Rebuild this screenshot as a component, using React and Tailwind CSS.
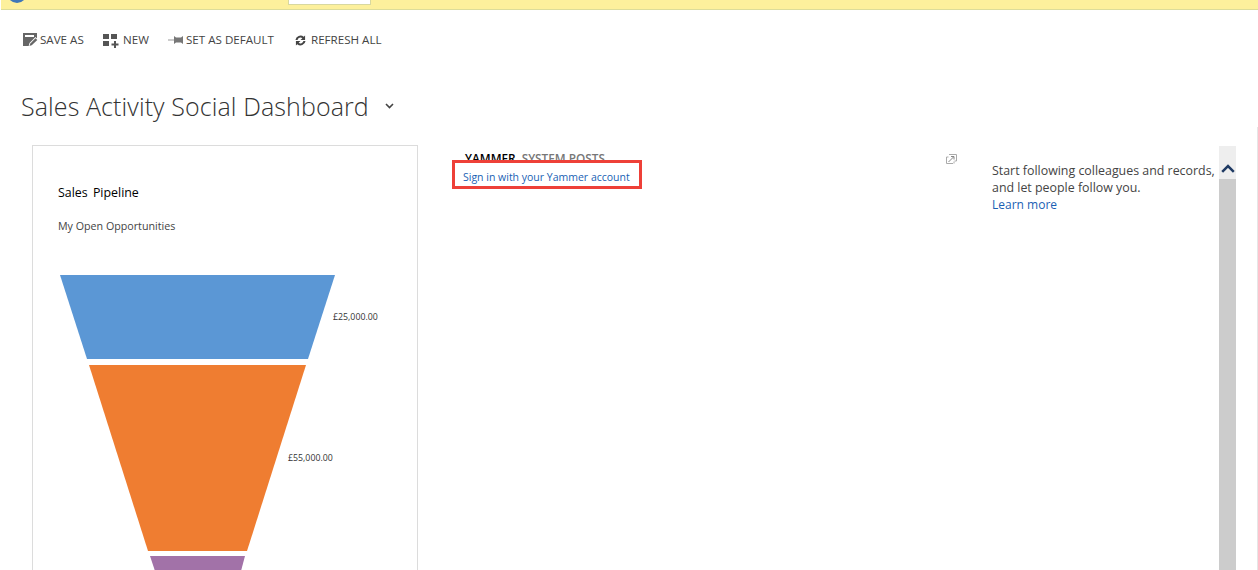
import React from 'react';

const ToolbarItem = ({ icon, label, className }) => (
  <div className={`flex items-center ${className}`}>
    {icon}
    <span className="text-[11.6px] leading-4 text-[#444]">{label}</span>
  </div>
);

const SaveIcon = () => (
  <svg width="16" height="14" viewBox="0 0 16 14" className="mr-[1px]">
    <path d="M0 0h14v6l-6 7H0z" fill="#666" />
    <path d="M2 2h9v2H2z" fill="#fff" />
    <path d="M5.500 13.500l1-3.500 6-6 3 3-6 5.500z" fill="#fff" />
    <path d="M6.500 13l.8-2.500 5.200-5.200 1.800 1.800-5.300 4.900z" fill="#666" />
  </svg>
);

const NewIcon = () => (
  <svg width="16" height="15" viewBox="0 0 16 15" className="mr-[4px]">
    <path d="M0 1h6v5H0zM8 1h6v5H8zM0 8h6v5H0z" fill="#555" />
    <path d="M11 8h2v2.500h2.500v2H13V15h-2v-2.500H8.500v-2H11z" fill="#555" />
  </svg>
);

const PinIcon = () => (
  <svg width="16" height="10" viewBox="0 0 16 10" className="mr-[2px]">
    <path d="M0 4.500h7v1H0z" fill="#999" />
    <path d="M6 1l2 1.500h5L15 1v8l-2-1.500H8L6 9z" fill="#777" />
  </svg>
);

const RefreshIcon = () => (
  <svg width="11" height="11" viewBox="0 0 12 12" className="mr-[5px]">
    <path d="M.5 5.500a5.500 5.500 0 0 1 9-3.500L11 .5v5H6l2-2A3.300 3.300 0 0 0 2.800 5.500z" fill="#444" />
    <path d="M11.500 6.500a5.500 5.500 0 0 1-9 3.500L1 11.500v-5h5l-2 2a3.300 3.300 0 0 0 5.200-2z" fill="#444" />
  </svg>
);

export default function App() {
  return (
    <div className="relative w-[1258px] h-[570px] overflow-hidden bg-white font-['Open_Sans','Liberation_Sans',sans-serif]">
      {/* Notification bar, cut off by the top of the screenshot */}
      <div className="relative h-[10px] ml-[1px] bg-[#fdf09c] border-b border-[#dcdc9a] overflow-hidden">
        <div className="absolute left-[6px] -top-[17px] w-5 h-5 rounded-full bg-[#3f77b8]" />
        <div className="absolute left-[287px] -top-[1px] w-[83px] h-[6px] bg-white border border-[#d8d8a0]" />
      </div>

      {/* Command bar */}
      <div className="flex items-center h-4 mt-[22px] pl-[23px]">
        <ToolbarItem icon={<SaveIcon />} label="SAVE AS" className="w-[80px]" />
        <ToolbarItem icon={<NewIcon />} label="NEW" className="w-[65px]" />
        <ToolbarItem icon={<PinIcon />} label="SET AS DEFAULT" className="w-[127px]" />
        <ToolbarItem icon={<RefreshIcon />} label="REFRESH ALL" />
      </div>

      {/* Title */}
      <div className="flex items-center h-9 mt-[40px] pl-[21px]">
        <h1 className="text-[25px] leading-9 font-light tracking-[0.1px] text-[#333]">Sales Activity Social Dashboard</h1>
        <svg width="9" height="6" viewBox="0 0 9 6" className="ml-[16px]">
          <path d="M1 1l3.500 3.500L8 1" fill="none" stroke="#444" strokeWidth="1.600" />
        </svg>
      </div>

      <div className="flex items-start mt-[21px] pl-[32px]">
        {/* Chart card */}
        <div className="w-[386px] h-[440px] border border-[#dcdcdc] shrink-0">
          <p className="mt-[39px] ml-[25px] text-[12.400px] leading-4 [word-spacing:2px] text-black">Sales Pipeline</p>
          <p className="mt-[17px] ml-[25px] text-[10.700px] leading-4 text-[#444]">My Open Opportunities</p>
          <svg width="384" height="300" viewBox="0 0 384 300" className="mt-[41px]">
            <polygon points="27,0 302,0 275,84 54,84" fill="#5b97d5" />
            <polygon points="56,90 273,90 214,276 115,276" fill="#ef7d31" />
            <polygon points="117,281 212,281 208,296 122,296" fill="#a272a8" />
            <text x="300" y="45" fontSize="8.800" fill="#333">£25,000.00</text>
            <text x="255" y="186" fontSize="8.800" fill="#333">£55,000.00</text>
          </svg>
        </div>

        {/* Yammer panel */}
        <div className="w-[538px] h-[440px] shrink-0 relative">
          <div className="flex gap-[6px] mt-[5px] ml-[47px] text-[11.800px] leading-4 font-semibold">
            <span className="text-black">YAMMER</span>
            <span className="text-[#777]">SYSTEM POSTS</span>
          </div>
          <div className="relative w-[190px] h-[29px] -mt-[6px] ml-[34px] pl-[8px] border-[3px] border-[#ee4038] bg-white text-[10.500px] leading-[28px] text-[#1a5fb4] whitespace-nowrap">
            Sign in with your Yammer account
          </div>
          <svg width="11" height="10" viewBox="0 0 11 10" className="absolute left-[528px] top-[9px]">
            <path d="M.5 3v6.500h6.500M.5 3h2M8 9.500V7.500M3 .5h7.500v6.500h-2" fill="none" stroke="#aaa" />
            <path d="M2.500 8l5-5M5 2.500h3v3" fill="none" stroke="#888" />
          </svg>
        </div>

        {/* Follow hint */}
        <div className="w-[263px] shrink-0 pl-[36px] pt-[17px] text-[12.400px] leading-[17px] text-[#444]">
          <p className="whitespace-nowrap">Start following colleagues and records,</p>
          <p className="whitespace-nowrap">and let people follow you.</p>
          <p className="text-[12px] text-[#1a5fb4]">Learn more</p>
        </div>

        {/* Scrollbar */}
        <div className="w-[17px] h-[440px] mt-[1px] shrink-0 flex flex-col bg-[#ccc]">
          <div className="flex justify-center h-[33px] pt-[18px] bg-[#eee]">
            <svg width="14" height="9" viewBox="0 0 14 9">
              <path d="M1.200 7.800L7 2l5.800 5.800" fill="none" stroke="#1f3a63" strokeWidth="2.500" />
            </svg>
          </div>
        </div>

        {/* Edge of the neighbouring pane */}
        <div className="w-px h-[460px] ml-[21px] -mt-[18px] shrink-0 bg-[#e6e6e6]" />
      </div>
    </div>
  );
}
